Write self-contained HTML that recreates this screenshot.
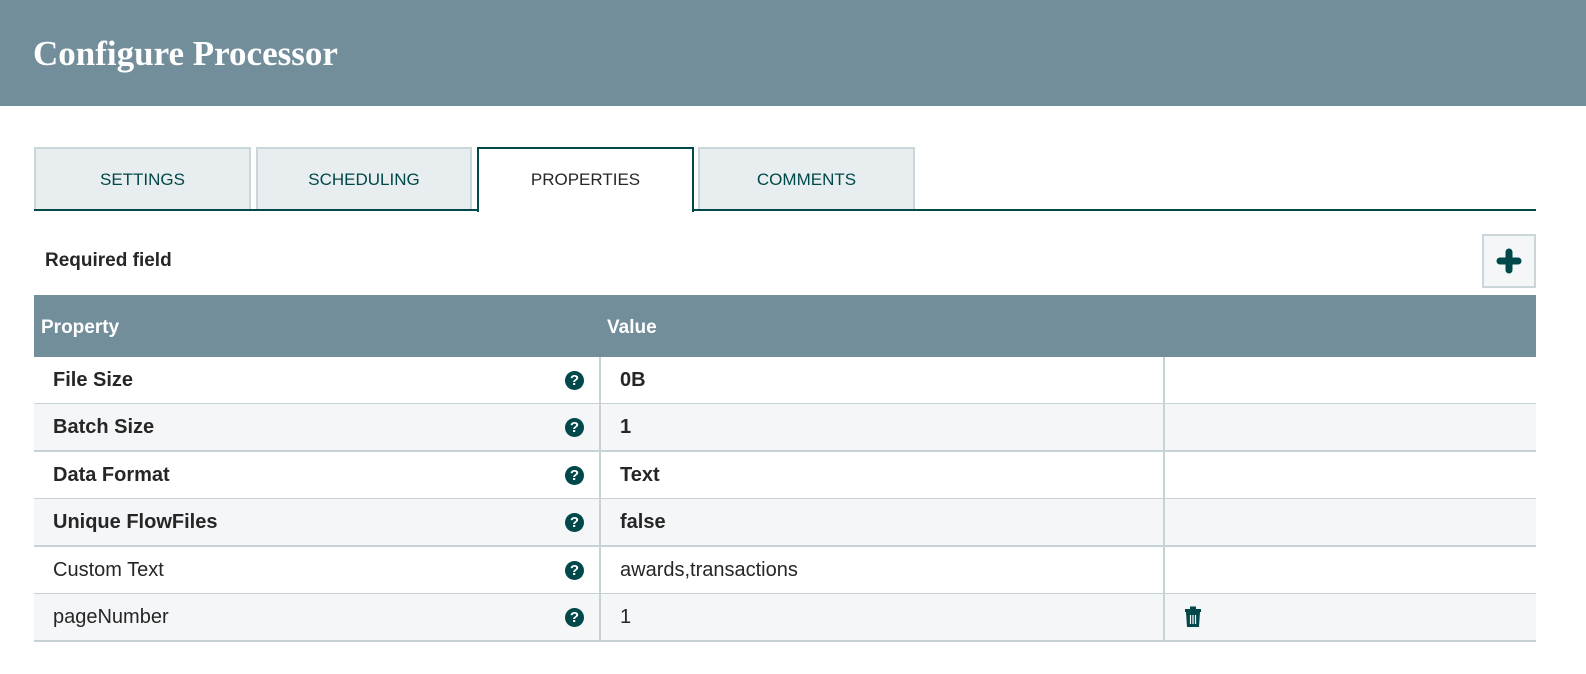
<!DOCTYPE html>
<html><head><style>
*{box-sizing:border-box;margin:0;padding:0}
body{width:1586px;height:674px;background:#fff;font-family:"Liberation Sans",sans-serif;position:relative;overflow:hidden}
.hdr{position:absolute;left:0;top:0;width:1586px;height:106px;background:#728e9b}
.hdr h1{position:absolute;left:33px;top:34px;font-family:"Liberation Serif",serif;font-weight:bold;font-size:35px;color:#fff}
.tab{position:absolute;top:147px;height:63px;background:#e8edef;border:2px solid #cbd6db;border-bottom:none;color:#004849;font-size:17px;text-align:center;line-height:62px}
.tab.act{background:#fff;border:2px solid #004849;border-bottom:none;color:#262626;height:65px;z-index:2}
.line{position:absolute;left:34px;top:209px;width:1502px;height:2px;background:#004849}
.req{position:absolute;left:45px;top:250px;font-weight:bold;font-size:19px;color:#262626}
.plus{position:absolute;left:1482px;top:234px;width:54px;height:54px;border:2px solid #cbd6db;background:#f4f6f8}
.th{position:absolute;left:34px;top:295px;width:1502px;height:62px;background:#728e9b;color:#fff;font-weight:bold;font-size:19px}
.row{position:absolute;left:34px;width:1502px;height:48px;border-bottom:2px solid #c7d2d7;font-size:20px;color:#262626}
.row span{position:absolute;top:12px}
.vd{position:absolute;top:0;bottom:0;width:2px;background:#c7d2d7}
.q{position:absolute;left:531px;top:14px;width:19px;height:19px;border-radius:50%;background:#004849;color:#fff;font-size:15px;font-weight:bold;text-align:center;line-height:19px}
</style></head><body>
<div class="hdr"><h1>Configure Processor</h1></div>
<div class="tab" style="left:34px;width:217px">SETTINGS</div>
<div class="tab" style="left:256px;width:216px">SCHEDULING</div>
<div class="tab act" style="left:477px;width:217px">PROPERTIES</div>
<div class="tab" style="left:698px;width:217px">COMMENTS</div>
<div class="line"></div>
<div class="req">Required field</div>
<div class="plus"><svg width="50" height="50" viewBox="0 0 50 50"><path d="M25 16V34M16 25H34" stroke="#004849" stroke-width="7" stroke-linecap="round"/></svg></div>
<div class="th"><span style="position:absolute;left:7px;top:22px">Property</span><span style="position:absolute;left:573px;top:22px">Value</span></div>

<div class="row" style="top:357px;background:#fff"><span style="left:19px;font-weight:bold">File Size</span><div class="q">?</div><div class="vd" style="left:565px"></div><span style="left:586px;font-weight:bold">0B</span><div class="vd" style="left:1129px"></div></div>
<div class="row" style="top:404px;background:#f4f6f8"><span style="left:19px;font-weight:bold">Batch Size</span><div class="q">?</div><div class="vd" style="left:565px"></div><span style="left:586px;font-weight:bold">1</span><div class="vd" style="left:1129px"></div></div>
<div class="row" style="top:452px;background:#fff"><span style="left:19px;font-weight:bold">Data Format</span><div class="q">?</div><div class="vd" style="left:565px"></div><span style="left:586px;font-weight:bold">Text</span><div class="vd" style="left:1129px"></div></div>
<div class="row" style="top:499px;background:#f4f6f8"><span style="left:19px;font-weight:bold">Unique FlowFiles</span><div class="q">?</div><div class="vd" style="left:565px"></div><span style="left:586px;font-weight:bold">false</span><div class="vd" style="left:1129px"></div></div>
<div class="row" style="top:547px;background:#fff"><span style="left:19px">Custom Text</span><div class="q">?</div><div class="vd" style="left:565px"></div><span style="left:586px">awards,transactions</span><div class="vd" style="left:1129px"></div></div>
<div class="row" style="top:594px;background:#f4f6f8"><span style="left:19px">pageNumber</span><div class="q">?</div><div class="vd" style="left:565px"></div><span style="left:586px">1</span><div class="vd" style="left:1129px"></div>
<svg style="position:absolute;left:1150px;top:12px" width="18" height="22" viewBox="0 0 18 22"><rect x="1" y="3" width="16" height="3" fill="#004849"/><rect x="6" y="0.5" width="6" height="3" fill="#004849"/><path d="M2 6H16L15 21H3Z" fill="#004849"/><path d="M6.5 9V18M9 9V18M11.5 9V18" stroke="#fff" stroke-width="1.2"/></svg></div>
</body></html>
